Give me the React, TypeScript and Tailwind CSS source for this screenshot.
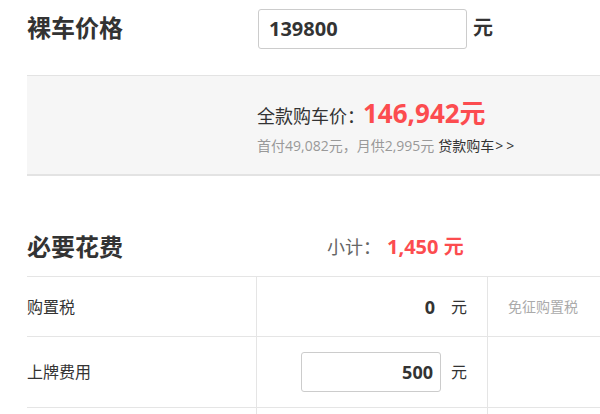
import React from "react";

const font = { fontFamily: '"Open Sans", "Noto Sans CJK SC", sans-serif' };

export default function App() {
  return (
    <div
      className="w-[600px] h-[414px] overflow-hidden bg-white pl-[27px] text-[#333]"
      style={font}
    >
      <div className="w-[600px]">
        {/* 裸车价格 */}
        <div className="h-[75px] flex items-start pt-[9px]">
          <div className="w-[229px] h-[40px] flex items-center">
            <span className="text-[24px] font-bold leading-none -mt-[3px]">裸车价格</span>
          </div>
          <div className="ml-[2px] w-[209px] h-[40px] border border-[#ccc] rounded-[3px] flex items-center pl-[10px]">
            <span className="text-[20px] font-bold leading-none">139800</span>
          </div>
          <div className="h-[40px] flex items-center ml-[6px]">
            <span className="text-[20px] font-bold leading-none -mt-[2px]">元</span>
          </div>
        </div>

        {/* 全款购车价 */}
        <div className="h-[101px] bg-[#f6f6f6] border-t border-[#e3e3e3] border-b-2 border-b-[#e3e3e3] pl-[230px] pt-[24px]">
          <div className="flex items-baseline h-[28px]">
            <span className="text-[18px] leading-none">全款购车价：</span>
            <span className="text-[26px] font-bold text-[#fc4c4f] leading-none -ml-[2px]">146,942元</span>
          </div>
          <div className="mt-[11px] text-[14px] leading-none flex items-baseline">
            <span className="text-[#999]">首付49,082元，月供2,995元</span>
            <span className="ml-[4px] text-[#333]">贷款购车<span className="tracking-[3px] ml-[1px]">&gt;&gt;</span></span>
          </div>
        </div>

        {/* 必要花费 */}
        <div className="h-[100px] flex items-end pb-[14px]">
          <div className="w-[300px] h-[30px] flex items-center">
            <span className="text-[24px] font-bold leading-none">必要花费</span>
          </div>
          <div className="h-[30px] flex items-center -mt-[9px]">
            <span className="text-[18px] text-[#666] leading-none">小计：</span>
            <span className="text-[20px] font-bold text-[#fc4c4f] leading-none ml-[6px]">1,450 元</span>
          </div>
        </div>

        {/* Table */}
        <div className="border-t border-[#e5e5e5]">
          <div className="flex h-[60px] border-b border-[#e5e5e5]">
            <div className="w-[229px] flex items-center text-[16px]">购置税</div>
            <div className="w-[232px] border-l border-r border-[#e5e5e5] flex items-center justify-end pr-[20px]">
              <div className="w-[140px] text-right pr-[6px] text-[18px] font-bold leading-none">0</div>
              <span className="ml-[10px] text-[16px] leading-none">元</span>
            </div>
            <div className="flex-1 flex items-center pl-[20px] text-[14px] text-[#aaa]">免征购置税</div>
          </div>
          <div className="flex h-[71px] border-b border-[#e5e5e5]">
            <div className="w-[229px] flex items-center text-[16px]">上牌费用</div>
            <div className="w-[232px] border-l border-r border-[#e5e5e5] flex items-center justify-end pr-[20px]">
              <div className="w-[140px] h-[40px] border border-[#ccc] rounded-[3px] flex items-center justify-end pr-[7px] text-[18px] font-bold leading-none">500</div>
              <span className="ml-[10px] text-[16px] leading-none">元</span>
            </div>
            <div className="flex-1" />
          </div>
          <div className="flex h-[40px]">
            <div className="w-[229px]" />
            <div className="w-[232px] border-l border-r border-[#e5e5e5]" />
            <div className="flex-1" />
          </div>
        </div>
      </div>
    </div>
  );
}
